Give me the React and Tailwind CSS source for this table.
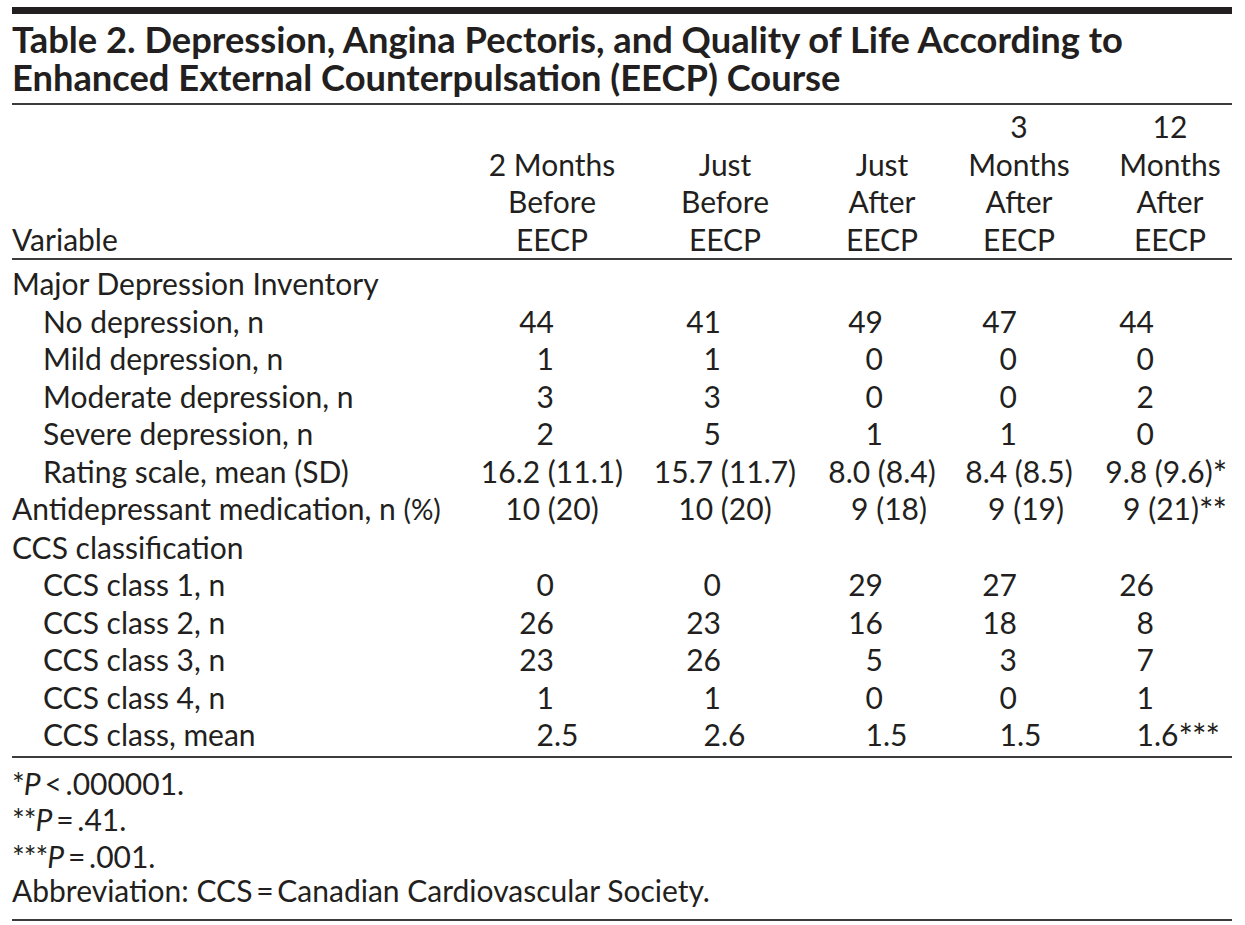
import React from "react";

const anchors = ["w-[88px]", "w-[83px]", "w-[71px]", "w-[65px]", "w-[68px]"];

// decimal aligned unless the row is centered
const rows = [
  { label: "Major Depression Inventory", head: true },
  { label: "No depression, n", vals: ["44", "41", "49", "47", "44"] },
  { label: "Mild depression, n", vals: ["1", "1", "0", "0", "0"] },
  { label: "Moderate depression, n", vals: ["3", "3", "0", "0", "2"] },
  { label: "Severe depression, n", vals: ["2", "5", "1", "1", "0"] },
  {
    label: "Rating scale, mean (SD)",
    center: true,
    vals: ["16.2 (11.1)", "15.7 (11.7)", "8.0 (8.4)", "8.4 (8.5)", "9.8 (9.6)"],
    stars: [null, null, null, null, "*"],
  },
  {
    label: "Antidepressant medication, n (%)",
    head: true,
    center: true,
    vals: ["10 (20)", "10 (20)", "9 (18)", "9 (19)", "9 (21)"],
    shift: ["", "", "pl-[14px]", "pl-[14px]", "pl-[4px]"],
    stars: [null, null, null, null, "**"],
  },
  { label: "CCS classification", head: true },
  { label: "CCS class 1, n", vals: ["0", "0", "29", "27", "26"] },
  { label: "CCS class 2, n", vals: ["26", "23", "16", "18", "8"] },
  { label: "CCS class 3, n", vals: ["23", "26", "5", "3", "7"] },
  { label: "CCS class 4, n", vals: ["1", "1", "0", "0", "1"] },
  { label: "CCS class, mean", vals: ["2.5", "2.6", "1.5", "1.5", "1.6"], stars: [null, null, null, null, "***"] },
];

const headers = [
  ["2 Months", "Before", "EECP"],
  ["Just", "Before", "EECP"],
  ["Just", "After", "EECP"],
  ["3", "Months", "After", "EECP"],
  ["12", "Months", "After", "EECP"],
];

function Star({ s }) {
  return <span className="relative top-[3px] text-[34px] leading-[0] tracking-[-1px]">{s}</span>;
}

function Value({ v, col, row }) {
  const star = row.stars ? row.stars[col] : null;
  if (row.center) {
    return (
      <div className={`text-center ${row.shift ? row.shift[col] : ""}`}>
        <span className="relative">
          {v}
          {star && (
            <span className="absolute left-full top-0 whitespace-nowrap">
              <Star s={star} />
            </span>
          )}
        </span>
      </div>
    );
  }
  const dot = v.indexOf(".");
  const int = dot === -1 ? v : v.slice(0, dot);
  const rest = dot === -1 ? "" : v.slice(dot);
  return (
    <div className="flex">
      <span className={`${anchors[col]} shrink-0 text-right`}>{int}</span>
      <span className="whitespace-nowrap">
        {rest}
        {star && <Star s={star} />}
      </span>
    </div>
  );
}

function Note({ stars, rel, p }) {
  return (
    <p>
      <span className="tracking-[-1px]">{stars}</span>
      <i>P</i>
      {"\u2009" + rel + "\u2009"}
      {p}
    </p>
  );
}

export default function App() {
  return (
    <div
      className="min-h-[925px] bg-white pl-[12px] pr-[13px] pt-[7px] text-[#231f20]"
      style={{ fontFamily: "Lato, 'Open Sans', sans-serif" }}
    >
      <div className="h-[7px] bg-[#231f20]" />
      <h1 className="mt-[6px] text-[36.3px] font-bold leading-[38px]">
        <span className="block whitespace-nowrap">
          Table 2. Depression, Angina Pectoris, and Quality of Life According to
        </span>
        <span className="block whitespace-nowrap">Enhanced External Counterpulsation (EECP) Course</span>
      </h1>
      <div className="mt-[7px] h-[2px] bg-[#3d3b3c]" />

      <div className="grid grid-cols-[454px_172px_174px_140px_134px_146px] pt-[3px] text-[30px] leading-[37.5px]">
        <div className="self-end">Variable</div>
        {headers.map((h, i) => (
          <div key={i} className={`flex flex-col justify-end text-center ${i === 4 ? "pl-[22px]" : ""}`}>
            {h.map((l) => (
              <span key={l}>{l}</span>
            ))}
          </div>
        ))}
      </div>
      <div className="h-[2px] bg-[#3d3b3c]" />

      <div className="grid grid-cols-[454px_172px_174px_140px_134px_146px] pt-[5px] text-[30px] leading-[37.5px]">
        {rows.map((r, ri) => (
          <React.Fragment key={ri}>
            <div className={`whitespace-nowrap ${r.head ? "" : "pl-[31px]"}`}>
              {r.label === "Antidepressant medication, n (%)" ? (
                <>
                  Antidepressant medication, n <span className="text-[28px]">(%)</span>
                </>
              ) : (
                r.label
              )}
            </div>
            {r.vals
              ? r.vals.map((v, ci) => <Value key={ci} v={v} col={ci} row={r} />)
              : [0, 1, 2, 3, 4].map((ci) => <div key={ci} />)}
          </React.Fragment>
        ))}
      </div>
      <div className="mt-[2px] h-[2px] bg-[#3d3b3c]" />

      <div className="pt-[7px] text-[30px] leading-[36.5px]">
        <Note stars="*" rel="<" p=".000001." />
        <Note stars="**" rel="=" p=".41." />
        <Note stars="***" rel="=" p=".001." />
        <p className="leading-[33px]">Abbreviation: CCS{"\u2009=\u2009"}Canadian Cardiovascular Society.</p>
      </div>
      <div className="mt-[12px] h-[2px] bg-[#3d3b3c]" />
    </div>
  );
}
